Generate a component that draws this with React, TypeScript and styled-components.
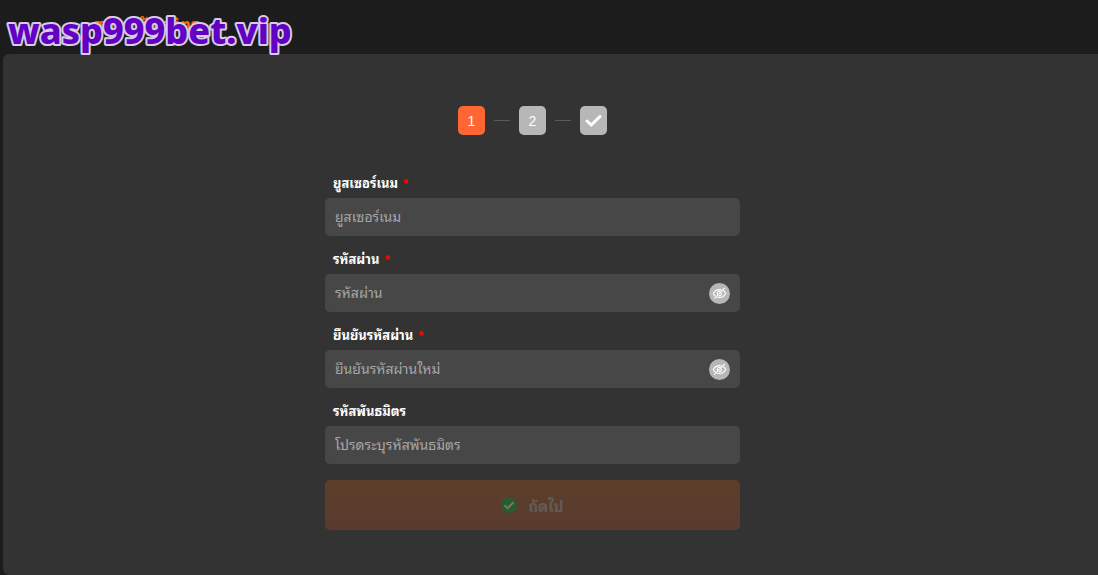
import React from "react";
import styled, { createGlobalStyle } from "styled-components";

const Global = createGlobalStyle`
  * { box-sizing: border-box; }
  body {
    margin: 0;
    background: #1c1c1c;
    color: #fff;
    font-family: "Liberation Sans", "Noto Sans Thai Looped", "Loma", "Noto Sans Thai", "Noto Sans", sans-serif;
    font-size: 14px;
  }
  button, input { font: inherit; }
`;

const Page = styled.div`
  min-height: 100vh;
  display: flex;
  flex-direction: column;
`;

const Header = styled.header`
  position: relative;
  height: 54px;
  padding: 14px 0 0 93px;
`;

const Title = styled.h1`
  margin: 0;
  color: #ff6a00;
  font-size: 17px;
  font-weight: 700;
  line-height: 24px;
`;

const Brand = styled.svg`
  position: absolute;
  left: 0;
  top: 0;
  overflow: visible;
`;

const Panel = styled.main`
  flex: 1;
  margin-left: 3px;
  padding: 52px 36px 44px 0;
  background: #333;
  border-radius: 6px 0 0 6px;
  display: flex;
  flex-direction: column;
  align-items: center;
`;

const Steps = styled.ol`
  display: flex;
  align-items: center;
  gap: 9px;
  margin: 0 0 40px;
  padding: 0;
  list-style: none;
`;

const Step = styled.li<{ $active?: boolean }>`
  display: flex;
  align-items: center;
  justify-content: center;
  width: 27px;
  height: 29px;
  border-radius: 5px;
  background: ${(p) => (p.$active ? "#ff6633" : "#b7b7b7")};
`;

const StepLine = styled.li`
  width: 16px;
  height: 1px;
  background: #5c5c5c;
`;

const Form = styled.form`
  width: 100%;
  max-width: 415px;
`;

const Field = styled.div`
  margin-bottom: 15px;
  &:last-of-type { margin-bottom: 16px; }
`;

const Label = styled.label`
  display: flex;
  gap: 5px;
  height: 23px;
  padding-left: 8px;
  font-size: 13px;
  font-weight: 700;
  line-height: 18px;
`;

const Required = styled.span`
  color: #f00;
`;

const InputWrap = styled.div`
  display: flex;
  align-items: center;
  height: 38px;
  padding: 0 10px;
  border-radius: 5px;
  background: #474747;
`;

const Input = styled.input`
  flex: 1;
  min-width: 0;
  height: 100%;
  padding: 0;
  border: 0;
  outline: 0;
  background: transparent;
  color: #fff;
  &::placeholder { color: #a6a6a6; opacity: 1; }
`;

const EyeButton = styled.button`
  display: flex;
  align-items: center;
  justify-content: center;
  width: 21px;
  height: 21px;
  padding: 0;
  border: 0;
  border-radius: 50%;
  background: #b7b7b7;
  color: #fff;
`;

const Submit = styled.button`
  display: flex;
  align-items: center;
  justify-content: center;
  gap: 11px;
  width: 100%;
  height: 50px;
  border: 0;
  border-radius: 5px;
  background: linear-gradient(#5c3f29, #5a3a30);
  color: #625c58;
  font-size: 15px;
  font-weight: 700;
`;

const EyeOff = () => (
  <svg width="15" height="15" viewBox="0 0 15 15" fill="none" stroke="currentColor" strokeWidth="1.1" strokeLinecap="round" aria-hidden="true">
    <path d="M11.6 4.8c.9.700 1.600 1.600 2.100 2.700-1.400 2.500-3.500 3.900-6.200 3.900-.6 0-1.200-.1-1.800-.2M3.200 10C2.400 9.300 1.800 8.500 1.300 7.500 2.700 5 4.800 3.600 7.500 3.600c.6 0 1.200.1 1.800.2" />
    <path d="M5.600 8.600a2.200 2.200 0 0 1 2.700-3.200M9.500 7.200a2.200 2.200 0 0 1-2 2.400" />
    <path d="M12.600 2.200 2.600 12.400" />
  </svg>
);

type FieldProps = { id: string; label: string; placeholder: string; required?: boolean; secret?: boolean };

const TextField = ({ id, label, placeholder, required, secret }: FieldProps) => (
  <Field>
    <Label htmlFor={id}>
      {label}
      {required && <Required>*</Required>}
    </Label>
    <InputWrap>
      <Input id={id} type={secret ? "password" : "text"} placeholder={placeholder} />
      {secret && (
        <EyeButton type="button" aria-label="แสดงรหัสผ่าน">
          <EyeOff />
        </EyeButton>
      )}
    </InputWrap>
  </Field>
);

export default function App() {
  return (
    <Page>
      <Global />
      <Header>
        <Title>สมัครพันธมิตร</Title>
        <Brand width="300" height="54" aria-label="wasp999bet.vip">
          <text x="8" y="44" fontFamily="'Noto Sans', sans-serif" fontWeight="800" fontSize="36" fill="#6200c4" stroke="#d6cce4" strokeWidth="4" strokeLinejoin="round" paintOrder="stroke">
            wasp999bet.vip
          </text>
        </Brand>
      </Header>
      <Panel>
        <Steps>
          <Step $active>1</Step>
          <StepLine aria-hidden="true" />
          <Step>2</Step>
          <StepLine aria-hidden="true" />
          <Step>
            <svg width="17" height="14" viewBox="0 0 17 14" fill="none" stroke="#fff" strokeWidth="3" aria-label="เสร็จสิ้น">
              <path d="M2 7 6.3 11 15 2.5" strokeLinecap="round" />
            </svg>
          </Step>
        </Steps>
        <Form onSubmit={(e) => e.preventDefault()}>
          <TextField id="username" label="ยูสเซอร์เนม" placeholder="ยูสเซอร์เนม" required />
          <TextField id="password" label="รหัสผ่าน" placeholder="รหัสผ่าน" required secret />
          <TextField id="confirm" label="ยืนยันรหัสผ่าน" placeholder="ยืนยันรหัสผ่านใหม่" required secret />
          <TextField id="partner" label="รหัสพันธมิตร" placeholder="โปรดระบุรหัสพันธมิตร" />
          <Submit type="submit" disabled>
            <svg width="16" height="16" viewBox="0 0 16 16" fill="none" aria-hidden="true">
              <circle cx="8" cy="8" r="8" fill="#2b5a2b" />
              <path d="m3.5 8.2 3.2 3 5.8-5.9" stroke="#707a70" strokeWidth="2" />
            </svg>
            ถัดไป
          </Submit>
        </Form>
      </Panel>
    </Page>
  );
}
